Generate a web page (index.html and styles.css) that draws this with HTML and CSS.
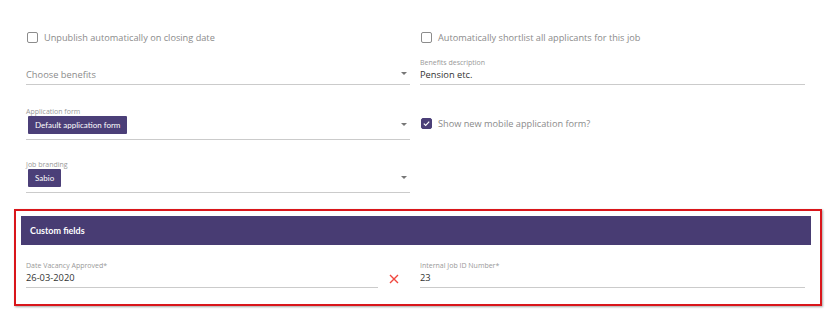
FILE: index.html
```html
<!DOCTYPE html>
<html>
<head>
<meta charset="utf-8">
<link rel="stylesheet" href="styles.css">
</head>
<body>
<div class="page">
  <div class="grid">
    <div class="cell cell-check">
      <label class="check"><span class="box"></span><span class="check-text">Unpublish automatically on closing date</span></label>
    </div>
    <div class="cell cell-check">
      <label class="check"><span class="box"></span><span class="check-text">Automatically shortlist all applicants for this job</span></label>
    </div>

    <div class="cell cell-text">
      <div class="field select">
        <div class="label"></div>
        <div class="value placeholder">Choose benefits</div>
        <span class="caret"></span>
      </div>
    </div>
    <div class="cell cell-text">
      <div class="field">
        <div class="label">Benefits description</div>
        <div class="value">Pension etc.</div>
      </div>
    </div>

    <div class="cell cell-chip">
      <div class="field select chipfield">
        <div class="label">Application form</div>
        <div class="chips"><span class="chip">Default application form</span></div>
        <span class="caret"></span>
      </div>
    </div>
    <div class="cell cell-chip cell-mobile">
      <label class="check"><span class="box checked"><svg viewBox="0 0 10 10" width="9" height="9"><path d="M2 5.2 L4.1 7.2 L8 3" fill="none" stroke="#fff" stroke-width="1.3"/></svg></span><span class="check-text">Show new mobile application form?</span></label>
    </div>

    <div class="cell cell-chip cell-last">
      <div class="field select chipfield">
        <div class="label">Job branding</div>
        <div class="chips"><span class="chip">Sabio</span></div>
        <span class="caret"></span>
      </div>
    </div>
    <div class="cell cell-chip cell-last"></div>
  </div>

  <div class="highlight">
    <div class="section-head">Custom fields</div>
    <div class="section-body">
      <div class="date-wrap">
        <div class="field">
          <div class="label">Date Vacancy Approved*</div>
          <div class="value">26-03-2020</div>
        </div>
        <span class="clear">
          <svg viewBox="0 0 10 10" width="10" height="10"><path d="M1 1 L9 9 M9 1 L1 9" stroke="#f0473f" stroke-width="1.4" fill="none"/></svg>
        </span>
      </div>
      <div class="field">
        <div class="label">Internal Job ID Number*</div>
        <div class="value">23</div>
      </div>
    </div>
  </div>
</div>
</body>
</html>
```

FILE: styles.css
```css
* { box-sizing: border-box; }
html, body { margin: 0; padding: 0; background: #fff; }
body { font-family: "Open Sans", "Liberation Sans", sans-serif; color: #333; }
.page { width: 840px; height: 318px; padding-top: 31px; }
.grid {
  display: grid;
  grid-template-columns: 384px 385px;
  column-gap: 10px;
  margin-left: 26px;
}
.cell-check { height: 28px; padding-top: 0; }
.cell-text { height: 49px; }
.cell-chip { height: 53px; }
.cell-last { height: 48px; }
.cell-mobile { padding-top: 9px; }

.check { display: flex; align-items: center; height: 12px; padding-left: 1px; }
.box { width: 11px; height: 11px; border: 1.5px solid #8c8c8c; border-radius: 2px; display: inline-flex; align-items: center; justify-content: center; flex: none; }
.box.checked { background: #4b3f78; border-color: #4b3f78; }
.box.checked svg { display: block; }
.check-text { font-size: 9.2px; color: #8b8b8b; padding-left: 6px; }

.field { position: relative; border-bottom: 1px solid #cbcbcb; }
.label { font-size: 7px; color: #999; height: 8px; line-height: 8px; white-space: nowrap; }
.value { font-size: 9.3px; line-height: 16px; height: 17px; color: #333; }
.value.placeholder { color: #8b8b8b; }
.chips { display: flex; height: 23px; padding: 0 0 0 2px; align-items: flex-start; }
.chip { display: block; background: #4b3f78; color: #fff; font-family: "Lato", "Open Sans", sans-serif; font-size: 8px; line-height: 18px; height: 18px; padding: 0 7px; border-radius: 1px; }
.chipfield .label { height: 8px; margin-bottom: 0; }
.caret { position: absolute; right: 3px; bottom: 9px; width: 0; height: 0; border-left: 3.5px solid transparent; border-right: 3.5px solid transparent; border-top: 3.5px solid #777; }
.chipfield .caret { bottom: 13px; }

.highlight {
  margin-left: 14px;
  width: 808px;
  height: 97px;
  border: 2px solid #d9161b;
  box-shadow: 1px 1px 2px rgba(0,0,0,0.35);
  padding: 5px 9px 0 5px;
}
.section-head {
  background: #483c73;
  color: #fff;
  height: 29px;
  line-height: 29px;
  font-family: "Lato", "Open Sans", sans-serif;
  font-weight: 700;
  font-size: 9px;
  padding-left: 9px;
}
.section-body {
  display: grid;
  grid-template-columns: 384px 385px;
  column-gap: 10px;
  padding: 17px 0 0 5px;
}
.date-wrap { display: flex; align-items: flex-end; gap: 11px; }
.date-wrap .field { width: 352px; }
.clear { display: inline-flex; margin-bottom: 4px; }
```
